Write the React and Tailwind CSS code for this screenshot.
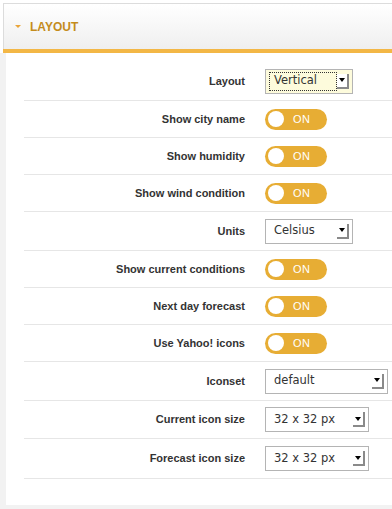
import React from 'react';

const rows = [
  { label: 'Layout', type: 'select', value: 'Vertical', width: 'w-[88px]', focus: true, h: 'h-[39px]' },
  { label: 'Show city name', type: 'toggle', h: 'h-[37px]' },
  { label: 'Show humidity', type: 'toggle', h: 'h-[37px]' },
  { label: 'Show wind condition', type: 'toggle', h: 'h-[37px]' },
  { label: 'Units', type: 'select', value: 'Celsius', width: 'w-[88px]', h: 'h-[39px]' },
  { label: 'Show current conditions', type: 'toggle', h: 'h-[37px]' },
  { label: 'Next day forecast', type: 'toggle', h: 'h-[37px]' },
  { label: 'Use Yahoo! icons', type: 'toggle', h: 'h-[37px]' },
  { label: 'Iconset', type: 'select', value: 'default', width: 'w-[123px]', h: 'h-[39px]' },
  { label: 'Current icon size', type: 'select', value: '32 x 32 px', width: 'w-[104px]', h: 'h-[38px]' },
  { label: 'Forecast icon size', type: 'select', value: '32 x 32 px', width: 'w-[104px]', h: 'h-[40px]' },
];

function Toggle() {
  return (
    <div className="relative w-[62px] h-[21px] rounded-full bg-[#e7ad34] flex items-center">
      <div className="ml-[3px] w-[16px] h-[16px] rounded-full bg-white" />
      <span className="ml-[9px] text-[11px] text-white font-['Liberation_Sans',sans-serif] tracking-[0.5px]">ON</span>
    </div>
  );
}

function Select({ value, width, focus }) {
  return (
    <div
      className={`${width} h-[25px] border border-[#b4b4b4] flex items-center pl-[3px] pr-[3px] ${
        focus ? 'bg-[#fdfbdc]' : 'bg-white'
      }`}
    >
      <div
        className={`flex-1 h-[19px] flex items-center pl-[4px] ${
          focus ? 'border border-dotted border-[#333]' : 'border border-transparent'
        }`}
      >
        <span className="text-[11.5px] text-[#333] font-['DejaVu_Sans',sans-serif]">{value}</span>
      </div>
      <div className="ml-auto w-[12px] h-[15px] bg-white border-r-2 border-b-2 border-[#8a8a8a] flex items-center justify-center">
        <div className="w-0 h-0 border-l-[3px] border-r-[3px] border-t-[4px] border-l-transparent border-r-transparent border-t-black" />
      </div>
    </div>
  );
}

export default function App() {
  return (
    <div className="w-[392px] h-[509px] bg-white overflow-hidden font-['Liberation_Sans',sans-serif]">
      <div className="pt-[3px] pl-[3px]">
        {/* Header */}
        <div className="h-[46px] border-t border-l border-[#dcdcdc] bg-gradient-to-b from-white to-[#efefef] flex items-center pl-[11px]">
          <div className="w-0 h-0 border-l-[3px] border-r-[3px] border-t-[3px] border-l-transparent border-r-transparent border-t-[#eaa53a]" />
          <span className="ml-[9px] text-[12px] font-bold text-[#c48c1c]">LAYOUT</span>
        </div>
        <div className="h-[4px] bg-[#f3b746]" />
      </div>

      {/* Content */}
      <div className="h-[454px] bg-white border-l-[6px] border-b-[2px] border-[#f2f2f2] pt-[9px]">
        <div className="ml-[18px]">
          {rows.map((r) => (
            <div key={r.label} className={`${r.h} border-b border-[#e6e6e6] flex items-center`}>
              <div className="w-[221px] text-right text-[11px] font-bold text-[#333]">{r.label}</div>
              <div className="ml-[20px]">
                {r.type === 'toggle' ? <Toggle /> : <Select value={r.value} width={r.width} focus={r.focus} />}
              </div>
            </div>
          ))}
        </div>
      </div>
      <div className="h-[3px] bg-[#f2f2f2]" />
    </div>
  );
}
